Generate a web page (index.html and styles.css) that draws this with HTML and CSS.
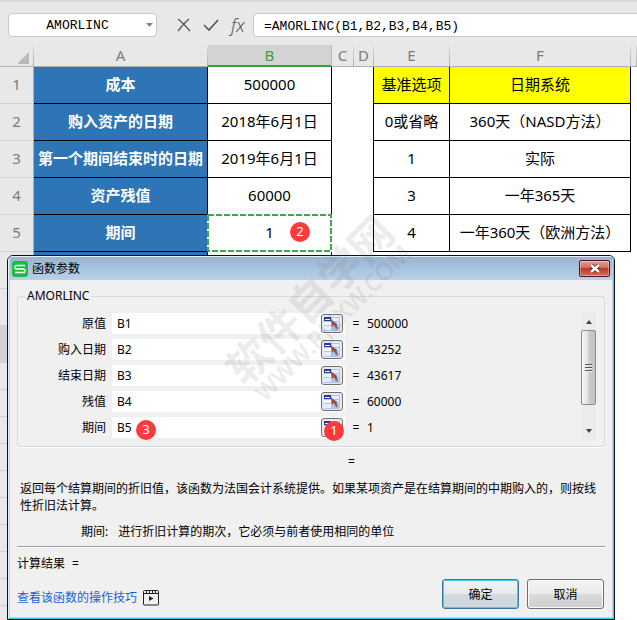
FILE: index.html
```html
<!DOCTYPE html>
<html lang="zh-CN">
<head>
<meta charset="utf-8">
<title>AMORLINC</title>
<link rel="stylesheet" href="styles.css">
</head>
<body>
<svg class="defs" aria-hidden="true">
  <symbol id="pick" viewBox="0 0 16 14">
    <rect x="0" y="0" width="16" height="14" fill="#a9c6f5"/>
    <rect x="8" y="1" width="7" height="3" fill="#e4eefc"/>
    <rect x="0" y="5" width="7" height="3" fill="#f4f8ff"/>
    <rect x="8" y="5" width="7" height="3" fill="#d3e3fb"/>
    <rect x="0" y="9" width="7" height="4" fill="#e4eefc"/>
    <rect x="0" y="0" width="7" height="4" fill="#2c3590"/>
    <rect x="1" y="2" width="5" height="1" fill="#fff"/>
    <path d="M7 3 L8 10 L10 8 L12 12 L13 11 L12 7 L13 7 Z" fill="#b5492c"/>
    <path d="M7 3 L13 7.500 L11.500 7.500 L13.500 11.500 L12.500 12.500" fill="none" stroke="#5a5058" stroke-width=".8"/>
  </symbol>
</svg>
<main class="app">
  <header class="toolbar">
    <div class="namebox">
      <input type="text" value="AMORLINC" aria-label="名称框">
      <svg width="7" height="4" viewBox="0 0 7 4"><path d="M0 0h7L3.500 4z" fill="#888"/></svg>
    </div>
    <div class="tools">
      <button type="button" aria-label="取消输入"><svg width="14" height="14" viewBox="0 0 14 14"><path d="M1 1 Q6 5 13 13 M12 1 Q6 6 1 13" fill="none" stroke="#555" stroke-width="1.300"/></svg></button>
      <button type="button" aria-label="确认输入"><svg width="16" height="14" viewBox="0 0 16 14"><path d="M1 7 L6 12 L15 2" fill="none" stroke="#555" stroke-width="1.600"/></svg></button>
      <button type="button" class="fx">fx</button>
    </div>
    <input class="formula" type="text" value="=AMORLINC(B1,B2,B3,B4,B5)" aria-label="编辑栏">
  </header>

  <table class="sheet">
    <colgroup><col class="c-num"><col class="c-a"><col class="c-b"><col class="c-c"><col class="c-d"><col class="c-e"><col class="c-f"><col></colgroup>
    <thead>
      <tr><th class="corner"><svg width="12" height="12" viewBox="0 0 12 12"><path d="M12 0V12H0z" fill="#b9b9b9"/></svg></th><th>A</th><th class="active">B</th><th>C</th><th>D</th><th>E</th><th>F</th><th></th></tr>
    </thead>
    <tbody>
      <tr><th>1</th><td class="key">成本</td><td class="cell">500000</td><td></td><td class="edge"></td><td class="cell head">基准选项</td><td class="cell head">日期系统</td><td></td></tr>
      <tr><th>2</th><td class="key">购入资产的日期</td><td class="cell">2018年6月1日</td><td></td><td class="edge"></td><td class="cell">0或省略</td><td class="cell">360天（NASD方法）</td><td></td></tr>
      <tr><th>3</th><td class="key">第一个期间结束时的日期</td><td class="cell">2019年6月1日</td><td></td><td class="edge"></td><td class="cell">1</td><td class="cell">实际</td><td></td></tr>
      <tr><th>4</th><td class="key">资产残值</td><td class="cell">60000</td><td></td><td class="edge"></td><td class="cell">3</td><td class="cell">一年365天</td><td></td></tr>
      <tr><th>5</th><td class="key">期间</td><td class="cell picked"><svg class="ants"><rect class="ants-base" x="1" y="1"/><rect class="ants-dash" x="1" y="1"/></svg>1<span class="badge badge-cell">2</span></td><td></td><td class="edge"></td><td class="cell">4</td><td class="cell">一年360天（欧洲方法）</td><td></td></tr>
      <tr><th></th><td class="key"></td><td class="cell"></td><td></td><td></td><td></td><td></td><td></td></tr>
      <tr><th></th><td colspan="7"></td></tr>
      <tr><th class="current"></th><td colspan="7"></td></tr>
      <tr class="short"><th></th><td colspan="7"></td></tr>
      <tr class="short"><th></th><td colspan="7"></td></tr>
      <tr class="short"><th></th><td colspan="7"></td></tr>
      <tr class="short"><th></th><td colspan="7"></td></tr>
      <tr class="short"><th></th><td colspan="7"></td></tr>
      <tr class="short"><th></th><td colspan="7"></td></tr>
      <tr class="short"><th></th><td colspan="7"></td></tr>
      <tr class="short"><th></th><td colspan="7"></td></tr>
      <tr class="short"><th></th><td colspan="7"></td></tr>
      <tr class="short"><th></th><td colspan="7"></td></tr>
    </tbody>
  </table>

  <section class="dialog" role="dialog" aria-labelledby="dlg-title">
    <div class="frame">
      <div class="titlebar">
        <svg width="16" height="16" viewBox="0 0 16 16"><rect width="16" height="16" rx="3" fill="#19bf3f"/><path d="M13 4.500H5Q3 4.500 3 6.300T5 8H11Q13 8 13 9.800T11 11.500H3" fill="none" stroke="#fff" stroke-width="1.500"/></svg>
        <h1 id="dlg-title">函数参数</h1>
        <button type="button" class="close" aria-label="关闭"><svg width="12" height="9" viewBox="0 0 12 9"><path d="M2 1L10 8M10 1L2 8" stroke="#50252a" stroke-width="4"/><path d="M2 1L10 8M10 1L2 8" stroke="#fff" stroke-width="2.400"/></svg></button>
      </div>
      <form class="content">
        <fieldset>
          <legend>AMORLINC</legend>
          <div class="args">
            <div class="list">
              <div class="arg"><label for="a1">原值</label><div class="field"><input id="a1" type="text" value="B1"><button type="button" aria-label="选择区域"><svg width="16" height="14"><use href="#pick"/></svg></button></div><span>=</span><output>500000</output></div>
              <div class="arg"><label for="a2">购入日期</label><div class="field"><input id="a2" type="text" value="B2"><button type="button" aria-label="选择区域"><svg width="16" height="14"><use href="#pick"/></svg></button></div><span>=</span><output>43252</output></div>
              <div class="arg"><label for="a3">结束日期</label><div class="field"><input id="a3" type="text" value="B3"><button type="button" aria-label="选择区域"><svg width="16" height="14"><use href="#pick"/></svg></button></div><span>=</span><output>43617</output></div>
              <div class="arg"><label for="a4">残值</label><div class="field"><input id="a4" type="text" value="B4"><button type="button" aria-label="选择区域"><svg width="16" height="14"><use href="#pick"/></svg></button></div><span>=</span><output>60000</output></div>
              <div class="arg"><label for="a5">期间</label><div class="field"><input id="a5" type="text" value="B5"><button type="button" aria-label="选择区域"><svg width="16" height="14"><use href="#pick"/></svg></button><span class="badge badge-input">3</span><span class="badge badge-pick">1</span></div><span>=</span><output>1</output></div>
            </div>
            <div class="scroll">
              <svg width="8" height="5" viewBox="0 0 8 5"><path d="M4 1L7 5H1z" fill="#444"/></svg>
              <div class="thumb"><i></i><i></i><i></i></div>
              <svg width="8" height="5" viewBox="0 0 8 5"><path d="M1 0H7L4 4z" fill="#444"/></svg>
            </div>
          </div>
        </fieldset>
        <p class="total">=</p>
        <p class="about">返回每个结算期间的折旧值，该函数为法国会计系统提供。如果某项资产是在结算期间的中期购入的，则按线性折旧法计算。</p>
        <p class="hint"><span>期间:</span><span>进行折旧计算的期次，它必须与前者使用相同的单位</span></p>
        <p class="result"><span>计算结果</span><span>=</span></p>
        <footer>
          <a href="#tips">查看该函数的操作技巧<svg width="16" height="16" viewBox="0 0 16 16"><path d="M1.500 .5H14.500Q15.500 .5 15.500 1.500V14Q15.500 15 14.500 15H1.500Q.5 15 .5 14V1.500Q.5 .5 1.500 .5zM.5 3.500H15.500M3.500 1V3M6.500 1V3M9.500 1V3M12.500 1V3" fill="none" stroke="#222"/><path d="M6 6V11L10.500 8.500z" fill="#222"/></svg></a>
          <button type="button" class="btn primary">确定</button>
          <button type="button" class="btn">取消</button>
        </footer>
      </form>
    </div>
  </section>

  <div class="watermark"><span class="wm-name">软件自学网</span><span class="wm-url">WWW.RJZXW.COM</span></div>
</main>
</body>
</html>
```
FILE: styles.css
```css
* { box-sizing: border-box; }

body, h1, p { margin: 0; }

body, input, button {
  font-family: "Noto Sans", "Noto Sans CJK SC", sans-serif;
  color: #000;
}

button { padding: 0; cursor: pointer; }

.defs { position: absolute; width: 0; height: 0; }

.app {
  position: relative;
  height: 100vh;
  min-height: 620px;
  overflow: hidden;
  background: #fff;
}

/* Formula bar */
.toolbar {
  display: flex;
  height: 45px;
  padding: 11px 0 0 8px;
  background: #e8e8e8;
  border-top: 2px solid #d9dada;
}

.namebox {
  display: flex;
  align-items: center;
  width: 149px;
  height: 24px;
  padding-right: 3px;
  background: #fff;
  border: 1px solid #c8c8c8;
  border-radius: 4px;
}

.namebox input {
  flex: 1;
  min-width: 0;
  padding: 2px 0 0;
  border: 0;
  background: none;
  text-align: center;
}

.namebox input, .formula { font: 13px/20px "Liberation Mono", monospace; }

.tools {
  display: flex;
  flex: none;
  align-items: center;
  gap: 12px;
  width: 96px;
  height: 24px;
  padding-left: 20px;
}

.tools button {
  display: flex;
  border: 0;
  background: none;
}

.tools .fx {
  font: italic 18px/20px "Noto Sans", sans-serif;
  font-weight: 300;
  color: #555;
}

.formula {
  flex: 1;
  min-width: 0;
  height: 24px;
  padding: 2px 10px 0;
  border: 1px solid #c8c8c8;
  border-right: 0;
  border-radius: 4px 0 0 4px;
}

/* Worksheet */
.sheet {
  width: 100%;
  table-layout: fixed;
  border-collapse: separate;
  border-spacing: 0;
  font-size: 15px;
  line-height: 20px;
  text-align: center;
}

.c-num { width: 34px; }
.c-a { width: 174px; }
.c-b { width: 124px; }
.c-c { width: 22px; }
.c-d { width: 20px; }
.c-e { width: 76px; }
.c-f { width: 181px; }

.sheet th, .sheet td { padding: 0 0 2px; white-space: nowrap; }

.sheet th {
  background: #e8e8e8;
  color: #7c7c7c;
  font-weight: 400;
}

.sheet thead th {
  height: 22px;
  padding: 0;
  line-height: 19px;
  border-bottom: 1px solid #adadad;
  border-right: 1px solid;
  border-image: linear-gradient(#e0e0e0, #adadad) 1;
}

.sheet thead .corner { text-align: right; padding-right: 4px; }
.sheet .corner svg { display: block; margin: 4px 0 0 auto; }

.sheet thead .active {
  background: #d3d3d3;
  color: #35a338;
  border-image: none;
  border-bottom: 2px solid #35a338;
  border-right-color: #bbb;
}

.sheet tbody tr { height: 37px; }
.sheet tbody .short { height: 27px; }

.sheet tbody th {
  border-right: 1px solid #adadad;
  border-bottom: 1px solid #d2d2d2;
}

.sheet tbody .current { background: #d3d3d3; }

.sheet .key, .sheet .cell {
  border-right: 1px solid #000;
  border-bottom: 1px solid #000;
}

.sheet .key {
  background: #2e75b6;
  color: #fff;
  font-weight: 700;
}

.sheet .head { background: #ff0; }
.sheet .edge { border-right: 1px solid #000; }
.sheet .picked { position: relative; z-index: 1; }

.ants {
  position: absolute;
  top: -1px;
  left: -1px;
  width: calc(100% + 2px);
  height: calc(100% + 2px);
}

.ants rect {
  width: calc(100% - 2px);
  height: calc(100% - 2px);
  fill: none;
  stroke-width: 2px;
}

.ants-base { stroke: #fff; }
.ants-dash { stroke: #44a644; stroke-dasharray: 6 2; }

.badge {
  position: absolute;
  width: 20px;
  height: 20px;
  border-radius: 50%;
  background: #fc3a3a;
  color: #fff;
  font-size: 13px;
  line-height: 19px;
  text-align: center;
}

.badge-cell { top: 7px; left: 82px; }
.badge-input { top: 3px; left: 24px; }
.badge-pick { top: 4px; right: 1px; }

/* Dialog window */
.dialog {
  position: absolute;
  top: 255px;
  left: 7px;
  right: 22px;
  border: 1px solid #111;
  border-radius: 6px 6px 0 0;
  background: #b9d1ea;
  font-size: 12px;
  line-height: 17px;
}

.frame {
  border: 1px solid #e8f1fa;
  border-right-color: #35d0f0;
  border-bottom-color: #35d0f0;
  border-radius: 5px 5px 0 0;
  padding: 0 1px 1px;
}

.titlebar {
  display: flex;
  align-items: center;
  gap: 4px;
  height: 23px;
  padding: 0 2px;
  background: linear-gradient(#99b4d1, #b9d1ea);
}

.titlebar h1 {
  flex: 1;
  font-size: 12px;
  font-weight: 400;
}

.close {
  display: flex;
  align-items: center;
  justify-content: center;
  width: 31px;
  height: 17px;
  border: 1px solid #4c1a20;
  border-radius: 2px;
  background: linear-gradient(#e2a193, #cf6f5e 45%, #b93a24 50%, #d4705a);
  box-shadow: inset 0 0 0 1px rgba(255, 255, 255, .35);
}

.content {
  padding: 8px 7px;
  background: #f0f0f0;
}

fieldset {
  min-width: 0;
  margin: 0;
  padding: 8px 8px 6px 0;
  border: 1px solid #d0dbe4;
  border-radius: 3px;
  box-shadow: 0 1px 0 #fff;
}

legend {
  margin-left: 7px;
  padding: 0 2px;
  line-height: 16px;
}

.args { display: flex; }

.list {
  display: flex;
  flex: 1;
  flex-direction: column;
  gap: 5px;
  padding-top: 1px;
}

.arg {
  display: grid;
  grid-template-columns: 88px 233px 10px 1fr;
  column-gap: 6px;
  align-items: center;
  height: 21px;
}

.arg label { text-align: right; }
.arg > span { text-align: center; }

.field {
  position: relative;
  display: flex;
  align-items: center;
  height: 21px;
  padding: 0 2px 0 5px;
  background: #fff;
}

.field input {
  flex: 1;
  min-width: 0;
  padding: 0;
  border: 0;
  background: none;
  font-size: 12px;
}

.field button {
  display: flex;
  align-items: center;
  justify-content: center;
  width: 22px;
  height: 19px;
  border: 1px solid #707070;
  border-radius: 3px;
  background: #e9e9ec;
}

.scroll {
  display: flex;
  flex-direction: column;
  align-items: center;
  width: 15px;
  height: 128px;
  padding: 7px 0 6px;
  background: #ebebeb;
}

.thumb {
  display: flex;
  flex-direction: column;
  align-items: center;
  justify-content: center;
  gap: 1px;
  width: 15px;
  height: 75px;
  margin: 6px 0 auto;
  border: 1px solid #8c8c8c;
  border-radius: 2px;
  background: linear-gradient(90deg, #f6f6f6, #e4e4e4 45%, #cfcfd2 50%, #c0c0c4);
}

.thumb i {
  width: 7px;
  height: 2px;
  background: #555;
  border-bottom: 1px solid #eee;
}

.total { margin-top: 6px; padding-left: 331px; }
.about { margin-top: 10px; padding: 0 5px 0 3px; }

.hint {
  display: flex;
  gap: 10px;
  margin-top: 9px;
  padding-left: 64px;
}

.result {
  display: flex;
  gap: 7px;
  margin-top: 6px;
  padding-top: 8px;
  border-top: 1px solid #9d9d9d;
  box-shadow: inset 0 1px 0 #fff;
}

.content footer {
  display: flex;
  gap: 8px;
  margin-top: 7px;
  padding-right: 1px;
}

.content a {
  display: flex;
  align-items: center;
  align-self: flex-end;
  gap: 6px;
  margin: 0 auto 3px 0;
  color: #1a5fd8;
  text-decoration: none;
}

.btn {
  width: 77px;
  height: 30px;
  border: 1px solid #707070;
  border-radius: 3px;
  background: linear-gradient(#f3f3f3, #ebebeb 48%, #dcdcdc 50%, #cdcdcd);
  box-shadow: inset 0 0 0 1px #fafafa;
  font-size: 12px;
}

.primary {
  border-color: #3577a5;
  background: linear-gradient(#f2f4f5, #e6eaec 48%, #d2dade 50%, #cfd8dc);
  box-shadow: inset 0 0 0 1px #42cdf5;
}

/* Diagonal site mark lying over the sheet and the window */
.watermark {
  position: absolute;
  top: 275px;
  left: 197px;
  display: flex;
  flex-direction: column;
  align-items: center;
  width: 240px;
  color: rgba(110, 110, 110, .14);
  font-weight: 700;
  white-space: nowrap;
  transform: rotate(-45deg);
  pointer-events: none;
}

.wm-name { font-size: 43px; line-height: 44px; }
.wm-url { font-size: 24px; line-height: 20px; font-weight: 600; }
```
